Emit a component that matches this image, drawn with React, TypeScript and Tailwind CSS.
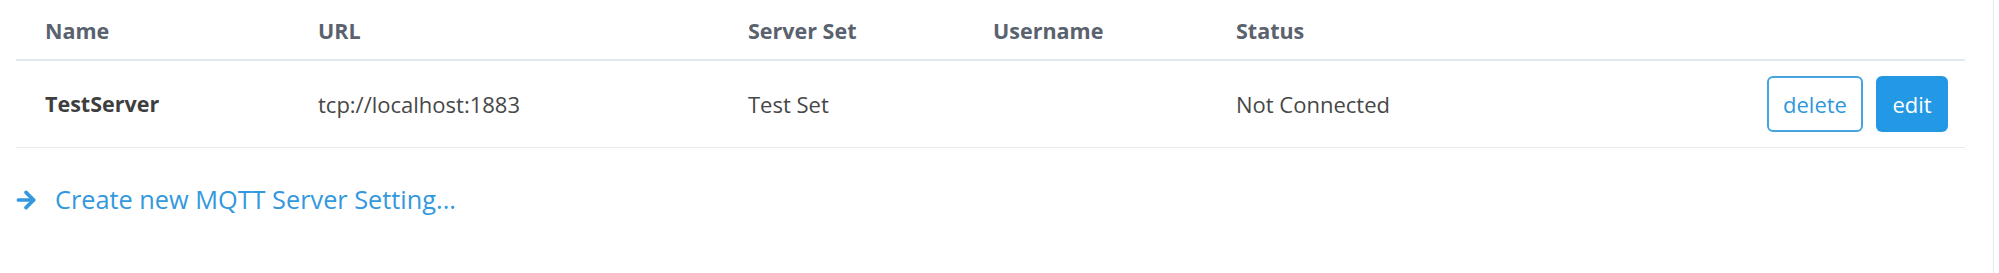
import { ArrowRight } from 'lucide-react';

const cols = 'grid grid-cols-[273px_430px_245px_243px_1fr_auto] items-center';

export default function App() {
  return (
    <div className="w-[1999px] h-[273px] bg-white font-['Open_Sans',sans-serif] flex">
      <div className="w-[1994px] border-r border-[#e6e9ec] pl-4 pr-[28px]">
        <div className={`${cols} h-[61px] border-b-2 border-[#e3e9ee] text-[21.5px] font-bold text-[#59626e] pt-[3px]`}>
          <div className="pl-[29px]">Name</div>
          <div className="pl-[29px]">URL</div>
          <div className="pl-[29px]">Server Set</div>
          <div className="pl-[29px]">Username</div>
          <div className="pl-[29px]">Status</div>
          <div />
        </div>
        <div className={`${cols} h-[87px] border-b border-[#e8ebee] text-[22px] text-[#474747]`}>
          <div className="pl-[29px] font-bold text-[21.5px] text-[#3e3e3e]">TestServer</div>
          <div className="pl-[29px]">tcp://localhost:1883</div>
          <div className="pl-[29px]">Test Set</div>
          <div className="pl-[29px]" />
          <div className="pl-[29px]">Not Connected</div>
          <div className="flex gap-[13px] pr-[17px]">
            <button className="h-[56px] w-[96px] rounded-md border-2 border-[#48a3e3] text-[22px] text-[#2f97de]">
              delete
            </button>
            <button className="h-[56px] w-[72px] rounded-md bg-[#2399e6] text-[22px] text-white">
              edit
            </button>
          </div>
        </div>
        <a href="#" className="mt-[33px] flex items-center text-[25.3px] text-[#3398dd]">
          <ArrowRight className="w-[26px] h-[26px] -ml-[3px]" strokeWidth={3.4} />
          <span className="ml-[16px]">Create new MQTT Server Setting...</span>
        </a>
      </div>
    </div>
  );
}
